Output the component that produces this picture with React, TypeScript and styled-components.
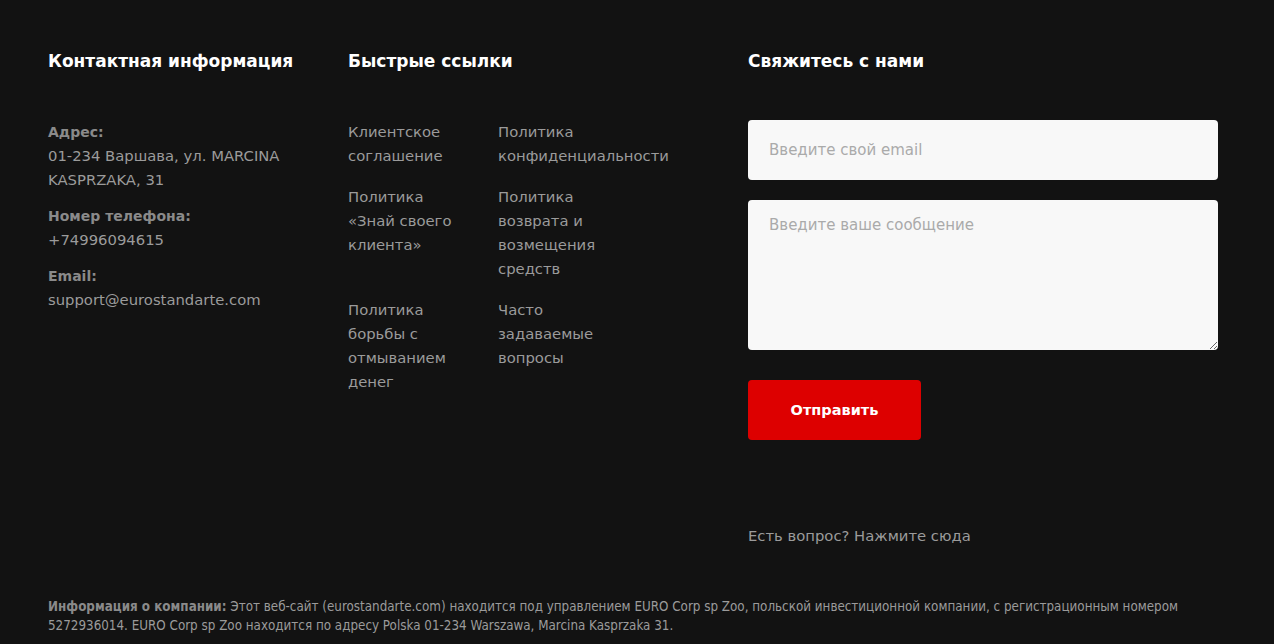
import { FunctionComponent } from "react";
import styled, { createGlobalStyle } from "styled-components";

const GlobalStyle = createGlobalStyle`
    html, body {
        margin: 0;
        padding: 0;
        background-color: #121212;
    }

    body {
        font-family: "DejaVu Sans", "Noto Sans", sans-serif;
    }

    * {
        box-sizing: border-box;
    }
`;

const Footer = styled.footer`
    display: flex;
    flex-direction: column;
    width: 100%;
    min-height: 644px;
    padding: 48px 48px 0 48px;
    background-color: #121212;
`;

const Columns = styled.div`
    display: grid;
    grid-template-columns: 300px 400px 470px;
    align-items: start;
`;

const Column = styled.div`
    display: flex;
    flex-direction: column;
`;

const ColumnTitle = styled.h3`
    margin: 0 0 46px 0;
    height: 26px;
    line-height: 26px;
    font-size: 17px;
    font-weight: 700;
    color: #ffffff;
    white-space: nowrap;
`;

const InfoBlock = styled.div`
    display: flex;
    flex-direction: column;
    margin-bottom: 12px;
`;

const InfoLabel = styled.span`
    font-size: 14px;
    line-height: 24px;
    font-weight: 700;
    color: #8a8a8a;
`;

const InfoText = styled.span`
    font-size: 14.8px;
    line-height: 24px;
    color: #9b9b9b;
`;

const LinksGrid = styled.div`
    display: grid;
    grid-template-columns: 150px 150px;
    row-gap: 17px;
`;

const LinkItem = styled.a`
    display: block;
    width: 115px;
    font-size: 14.8px;
    line-height: 24px;
    color: #9b9b9b;
    text-decoration: none;
    cursor: pointer;
`;

const Form = styled.form`
    display: flex;
    flex-direction: column;
    align-items: flex-start;
    gap: 20px;
`;

const EmailInput = styled.input`
    width: 100%;
    height: 60px;
    padding: 0 21px;
    border: none;
    border-radius: 4px;
    outline: none;
    background-color: #f8f8f8;
    font-family: inherit;
    font-size: 15px;
    color: #333;

    &::placeholder {
        color: #aaaaaa;
    }
`;

const MessageInput = styled.textarea`
    display: block;
    width: 100%;
    height: 150px;
    padding: 14px 21px;
    border: none;
    border-radius: 4px;
    outline: none;
    background-color: #f8f8f8;
    font-family: inherit;
    font-size: 15px;
    line-height: 22px;
    color: #333;

    &::placeholder {
        color: #aaaaaa;
    }
`;

const SubmitButton = styled.button`
    margin-top: 10px;
    width: 173px;
    height: 60px;
    border: none;
    border-radius: 4px;
    background-color: #dd0000;
    font-family: inherit;
    font-size: 14.5px;
    font-weight: 700;
    color: #ffffff;
    cursor: pointer;
`;

const QuestionLink = styled.a`
    display: block;
    margin-top: 84px;
    font-size: 14.8px;
    line-height: 24px;
    color: #9b9b9b;
    text-decoration: none;
    cursor: pointer;
`;

const CompanyInfo = styled.p`
    margin: 49px 0 0 0;
    max-width: 1150px;
    font-family: "DejaVu Sans Condensed", "DejaVu Sans", sans-serif;
    font-stretch: condensed;
    font-size: 13.3px;
    line-height: 19px;
    color: #9b9b9b;

    strong {
        font-weight: 700;
        color: #8a8a8a;
    }
`;

const quickLinks = [
    "Клиентское соглашение",
    "Политика конфиденциальности",
    "Политика «Знай своего клиента»",
    "Политика возврата и возмещения средств",
    "Политика борьбы с отмыванием денег",
    "Часто задаваемые вопросы",
];

const App: FunctionComponent = () => {
    return (
        <>
            <GlobalStyle />
            <Footer>
                <Columns>
                    <Column>
                        <ColumnTitle>Контактная информация</ColumnTitle>
                        <InfoBlock>
                            <InfoLabel>Адрес:</InfoLabel>
                            <InfoText>
                                01-234 Варшава, ул. MARCINA
                                <br />
                                KASPRZAKA, 31
                            </InfoText>
                        </InfoBlock>
                        <InfoBlock>
                            <InfoLabel>Номер телефона:</InfoLabel>
                            <InfoText>+74996094615</InfoText>
                        </InfoBlock>
                        <InfoBlock>
                            <InfoLabel>Email:</InfoLabel>
                            <InfoText>support@eurostandarte.com</InfoText>
                        </InfoBlock>
                    </Column>
                    <Column>
                        <ColumnTitle>Быстрые ссылки</ColumnTitle>
                        <LinksGrid>
                            {quickLinks.map(link => (
                                <LinkItem key={link}>{link}</LinkItem>
                            ))}
                        </LinksGrid>
                    </Column>
                    <Column>
                        <ColumnTitle>Свяжитесь с нами</ColumnTitle>
                        <Form onSubmit={e => e.preventDefault()}>
                            <EmailInput type="email" placeholder="Введите свой email" />
                            <MessageInput placeholder="Введите ваше сообщение" />
                            <SubmitButton type="submit">Отправить</SubmitButton>
                        </Form>
                        <QuestionLink>Есть вопрос? Нажмите сюда</QuestionLink>
                    </Column>
                </Columns>
                <CompanyInfo>
                    <strong>Информация о компании:</strong> Этот веб-сайт
                    (eurostandarte.com) находится под управлением EURO Corp sp Zoo,
                    польской инвестиционной компании, с регистрационным номером
                    5272936014. EURO Corp sp Zoo находится по адресу Polska 01-234
                    Warszawa, Marcina Kasprzaka 31.
                </CompanyInfo>
            </Footer>
        </>
    );
};

export default App;
